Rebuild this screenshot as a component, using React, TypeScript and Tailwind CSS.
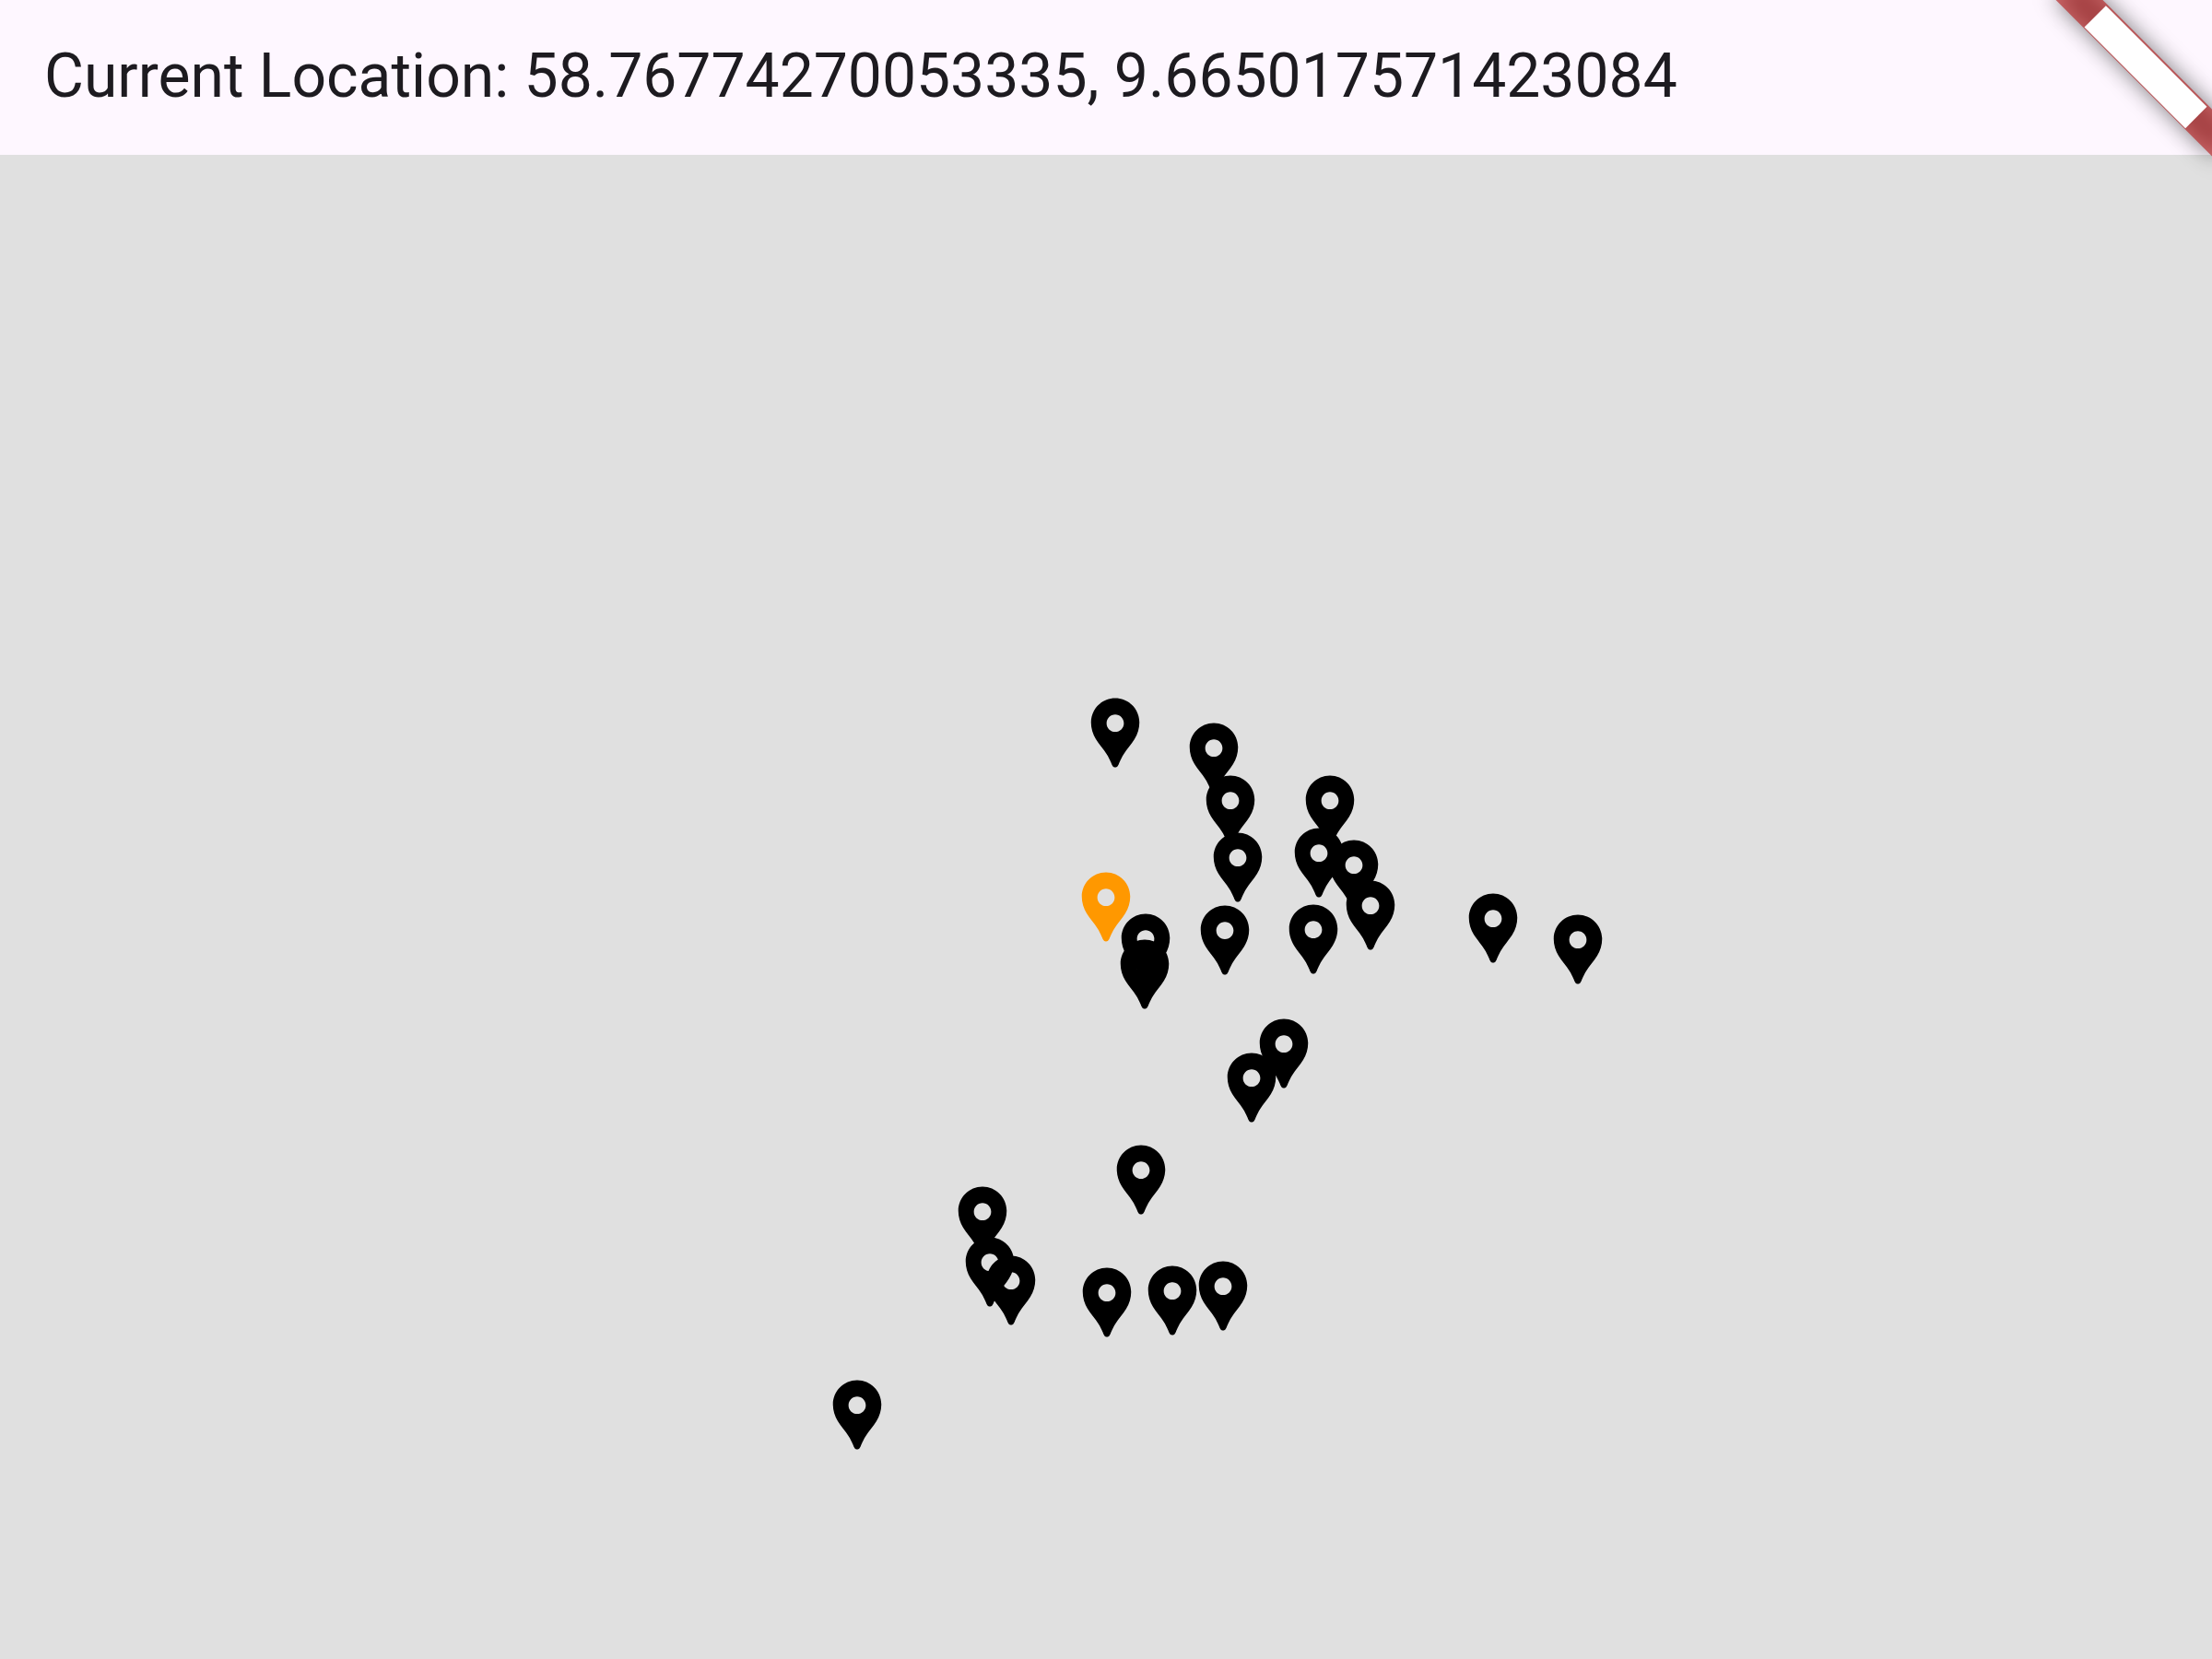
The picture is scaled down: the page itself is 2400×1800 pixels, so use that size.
type Marker = { x: number; y: number };

// Marker offsets from the current location, which sits in the middle of the map.
const markers: Marker[] = [
  { x: 10, y: -189 },
  { x: 117, y: -162 },
  { x: 135, y: -105 },
  { x: 143, y: -43 },
  { x: 43, y: 45 },
  { x: 42, y: 73 },
  { x: 129, y: 36 },
  { x: 225, y: 35 },
  { x: 243, y: -105 },
  { x: 231, y: -48 },
  { x: 269, y: -35 },
  { x: 287, y: 9 },
  { x: 420, y: 23 },
  { x: 512, y: 46 },
  { x: 193, y: 159 },
  { x: 158, y: 196 },
  { x: 38, y: 296 },
  { x: -134, y: 341 },
  { x: -126, y: 396 },
  { x: -103, y: 416 },
  { x: -270, y: 551 },
  { x: 1, y: 429 },
  { x: 72, y: 427 },
  { x: 127, y: 422 },
];

function Pin({ x, y, className, label }: Marker & { className: string; label: string }) {
  return (
    <svg
      role="img"
      aria-label={label}
      viewBox="0 0 24 24"
      fill="currentColor"
      className={`absolute -top-[45px] -left-[45px] size-[90px] ${className}`}
      style={{ transform: `translate(${x}px, ${y}px)` }}
    >
      <path
        fillRule="evenodd"
        d="M12 2C8.13 2 5 5.13 5 9c0 1.74.5 3.37 1.41 4.84.95 1.54 2.2 2.86 3.16 4.4.47.75.81 1.45 1.17 2.26.26.55.47 1.5 1.26 1.5s1-.95 1.25-1.5c.37-.81.7-1.51 1.17-2.26.96-1.53 2.21-2.85 3.16-4.4C18.5 12.37 19 10.74 19 9c0-3.87-3.13-7-7-7zm0 9.75c-1.38 0-2.5-1.12-2.5-2.5s1.12-2.5 2.5-2.5 2.5 1.12 2.5 2.5-1.12 2.5-2.5 2.5z"
      />
    </svg>
  );
}

function CornerBanner() {
  return (
    <div aria-hidden="true" className="pointer-events-none absolute inset-0 overflow-hidden">
      <div className="absolute top-[54px] -right-[48px] h-9 w-60 rotate-45">
        <div className="absolute inset-0 bg-black/50 blur-[12px]" />
        <div className="relative flex h-full items-end justify-center bg-[#b71c1c]/63 pb-px">
          <div className="h-[33px] w-[155px] bg-white" />
        </div>
      </div>
    </div>
  );
}

export default function App() {
  return (
    <div className="relative flex min-h-screen flex-col bg-[#e0e0e0] font-['Roboto',sans-serif]">
      <header className="flex h-[168px] items-center bg-[#fef7ff] px-12 pb-0.5">
        <h1 className="truncate text-[66px] leading-[84px] font-normal text-[#1d1b20]">
          Current Location: 58.76774270053335, 9.665017571423084
        </h1>
      </header>
      <main className="relative flex-1 overflow-hidden">
        <div className="absolute top-1/2 left-1/2">
          {markers.map((m, i) => (
            <Pin key={i} x={m.x} y={m.y} className="text-black" label={`Marker ${i + 1}`} />
          ))}
          <Pin x={0} y={0} className="text-[#ff9800]" label="Current location" />
        </div>
      </main>
      <CornerBanner />
    </div>
  );
}
